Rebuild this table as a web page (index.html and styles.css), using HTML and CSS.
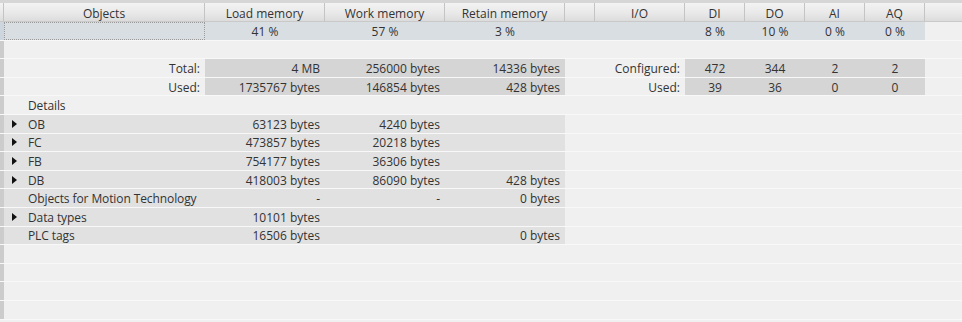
FILE: index.html
```html
<!DOCTYPE html>
<html>
<head>
<meta charset="utf-8">
<link rel="stylesheet" href="styles.css">
</head>
<body>
<div class="view">
  <div class="topband"></div>
  <div class="row head">
    <div class="strip"></div>
    <div class="hc">Objects</div>
    <div class="hc">Load memory</div>
    <div class="hc">Work memory</div>
    <div class="hc">Retain memory</div>
    <div class="hc"></div>
    <div class="hc">I/O</div>
    <div class="hc">DI</div>
    <div class="hc">DO</div>
    <div class="hc">AI</div>
    <div class="hc">AQ</div>
    <div class="hc last"></div>
  </div>

  <div class="row pct">
    <div class="strip"></div>
    <div class="c focus"></div>
    <div class="c ctr">41 %</div>
    <div class="c ctr">57 %</div>
    <div class="c ctr">3 %</div>
    <div class="c"></div>
    <div class="c"></div>
    <div class="c ctr">8 %</div>
    <div class="c ctr">10 %</div>
    <div class="c ctr">0 %</div>
    <div class="c ctr">0 %</div>
    <div class="c none"></div>
  </div>

  <div class="row"><div class="strip"></div></div>

  <div class="row">
    <div class="strip"></div>
    <div class="c rt">Total:</div>
    <div class="c rt dk">4 MB</div>
    <div class="c rt dk">256000 bytes</div>
    <div class="c rt dk">14336 bytes</div>
    <div class="c"></div>
    <div class="c rt">Configured:</div>
    <div class="c ctr dk">472</div>
    <div class="c ctr dk">344</div>
    <div class="c ctr dk">2</div>
    <div class="c ctr dk">2</div>
    <div class="c"></div>
  </div>

  <div class="row">
    <div class="strip"></div>
    <div class="c rt">Used:</div>
    <div class="c rt dk">1735767 bytes</div>
    <div class="c rt dk">146854 bytes</div>
    <div class="c rt dk">428 bytes</div>
    <div class="c"></div>
    <div class="c rt">Used:</div>
    <div class="c ctr dk">39</div>
    <div class="c ctr dk">36</div>
    <div class="c ctr dk">0</div>
    <div class="c ctr dk">0</div>
    <div class="c"></div>
  </div>

  <div class="row">
    <div class="strip"></div>
    <div class="c name"><span class="tw"></span>Details</div>
  </div>

  <div class="row det">
    <div class="strip"></div>
    <div class="c name lt"><span class="tw arrow"></span>OB</div>
    <div class="c rt lt">63123 bytes</div>
    <div class="c rt lt">4240 bytes</div>
    <div class="c rt lt"></div>
  </div>
  <div class="row det">
    <div class="strip"></div>
    <div class="c name lt"><span class="tw arrow"></span>FC</div>
    <div class="c rt lt">473857 bytes</div>
    <div class="c rt lt">20218 bytes</div>
    <div class="c rt lt"></div>
  </div>
  <div class="row det">
    <div class="strip"></div>
    <div class="c name lt"><span class="tw arrow"></span>FB</div>
    <div class="c rt lt">754177 bytes</div>
    <div class="c rt lt">36306 bytes</div>
    <div class="c rt lt"></div>
  </div>
  <div class="row det">
    <div class="strip"></div>
    <div class="c name lt"><span class="tw arrow"></span>DB</div>
    <div class="c rt lt">418003 bytes</div>
    <div class="c rt lt">86090 bytes</div>
    <div class="c rt lt">428 bytes</div>
  </div>
  <div class="row det">
    <div class="strip"></div>
    <div class="c name lt"><span class="tw"></span>Objects for Motion Technology</div>
    <div class="c rt lt">-</div>
    <div class="c rt lt">-</div>
    <div class="c rt lt">0 bytes</div>
  </div>
  <div class="row det">
    <div class="strip"></div>
    <div class="c name lt"><span class="tw arrow"></span>Data types</div>
    <div class="c rt lt">10101 bytes</div>
    <div class="c rt lt"></div>
    <div class="c rt lt"></div>
  </div>
  <div class="row det">
    <div class="strip"></div>
    <div class="c name lt"><span class="tw"></span>PLC tags</div>
    <div class="c rt lt">16506 bytes</div>
    <div class="c rt lt"></div>
    <div class="c rt lt">0 bytes</div>
  </div>

  <div class="row"><div class="strip"></div></div>
  <div class="row"><div class="strip"></div></div>
  <div class="row"><div class="strip"></div></div>
  <div class="row"><div class="strip"></div></div>
</div>
</body>
</html>
```

FILE: styles.css
```css
* { box-sizing: border-box; }
html, body {
  margin: 0;
  padding: 0;
  background: #f0f0f0;
}
body {
  font-family: "Open Sans", "Noto Sans", sans-serif;
  font-size: 12px;
  color: #333333;
  width: 962px;
  height: 322px;
  overflow: hidden;
}
.view {
  display: flex;
  flex-direction: column;
}
.topband {
  height: 3px;
  background: #d6d6d6;
}
.row {
  display: grid;
  grid-template-columns: 4px 201px 120px 120px 120px 30px 90px 60px 60px 60px 60px 1fr;
  height: 18.6px;
  border-bottom: 1px solid #f8f8f8;
}
.row.head {
  height: 19px;
  border-bottom: 1px solid #c9c9c9;
  background: linear-gradient(#f3f3f3, #e9e9e9 55%, #dcdcdc);
}
.head .strip {
  background: transparent;
  border-right: 1px solid #c4c4c4;
}
.hc {
  display: flex;
  align-items: center;
  justify-content: center;
  border-right: 1px solid #c4c4c4;
  line-height: 1;
  padding-top: 3px;
  white-space: nowrap;
}
.hc.last { border-right: none; }
.strip {
  background: #cccccc;
}
.c {
  display: flex;
  align-items: center;
  padding: 2px 5px 0 5px;
  white-space: nowrap;
  line-height: 1;
  min-width: 0;
}
.rt { justify-content: flex-end; }
.ctr { justify-content: center; padding-left: 0; padding-right: 0; }
.dk { background: #d5d5d5; }
.lt { background: #e1e1e1; }
.pct .c { background: #d9dee3; }
.pct .c.none { background: transparent; }
.pct .strip { background: #cdd6df; }
.pct .focus {
  outline: 1px dotted #9a9a9a;
  outline-offset: -1px;
}
.name {
  padding-left: 0;
  letter-spacing: -0.1px;
}
.tw {
  width: 24px;
  flex: none;
  display: flex;
  align-items: center;
  justify-content: flex-start;
  padding-left: 8px;
  margin-top: -2px;
}
.tw.arrow::before {
  content: "";
  width: 0;
  height: 0;
  border-left: 5px solid #111111;
  border-top: 4px solid transparent;
  border-bottom: 4px solid transparent;
}
```
